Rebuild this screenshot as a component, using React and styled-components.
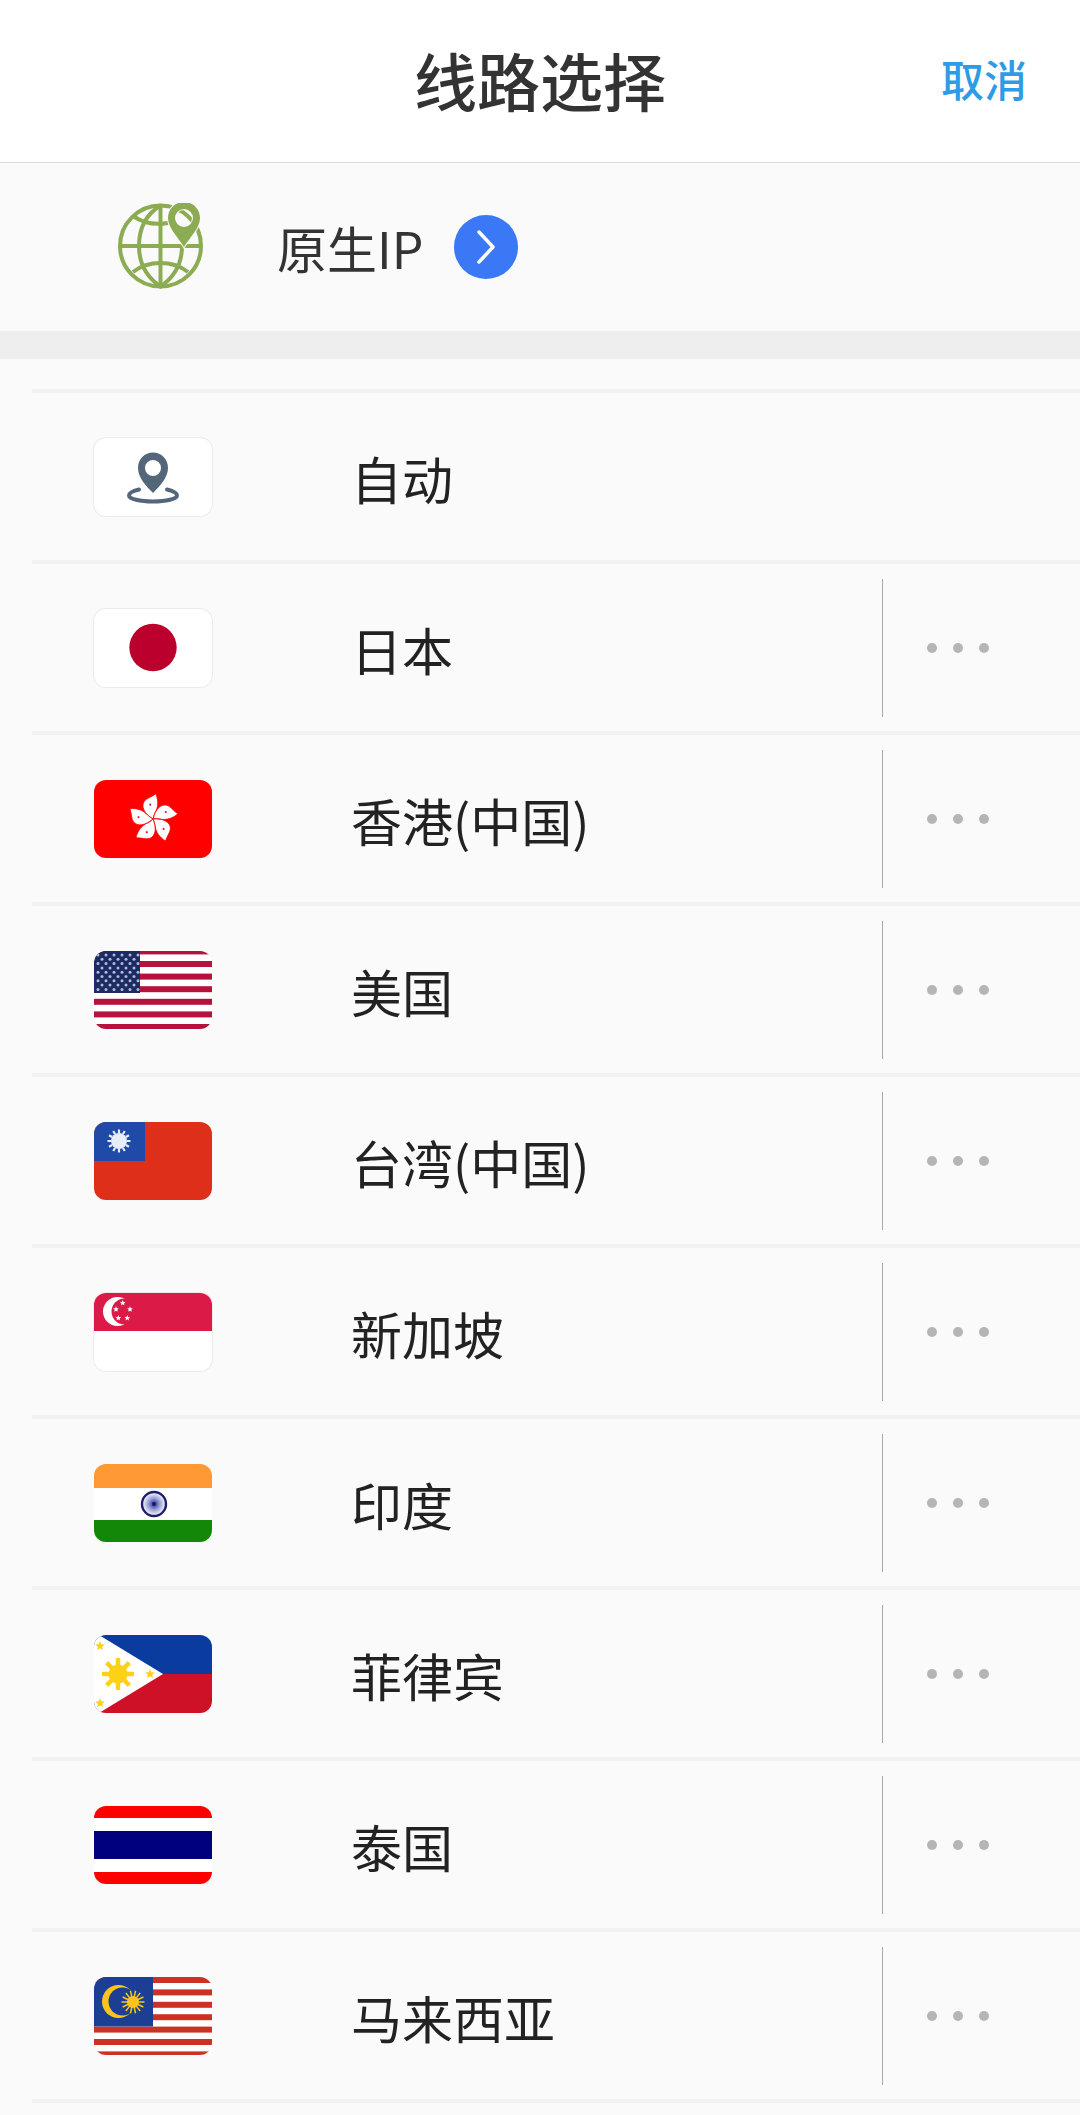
import React from 'react'
import styled, { createGlobalStyle } from 'styled-components'

const GlobalStyle = createGlobalStyle`
  html, body {
    margin: 0;
    padding: 0;
    background: #fafafa;
  }
  body {
    font-family: "Noto Sans CJK SC", "Noto Sans", sans-serif;
  }
`

const Page = styled.div`
  width: 1080px;
  height: 2115px;
  overflow: hidden;
  background: #fafafa;
`
const Header = styled.header`
  display: grid;
  grid-template-columns: 1fr auto 1fr;
  align-items: center;
  box-sizing: border-box;
  height: 163px;
  padding-bottom: 5px;
  background: #fff;
  border-bottom: 1px solid #dcdcdc;
`
const Title = styled.h1`
  grid-column: 2;
  margin: 0;
  font-size: 63px;
  line-height: 1;
  font-weight: 500;
  color: #333;
`
const Cancel = styled.span`
  grid-column: 3;
  justify-self: end;
  margin-right: 53px;
  font-size: 43px;
  line-height: 1;
  font-weight: 500;
  color: #2e9be6;
`
const IpRow = styled.div`
  display: flex;
  align-items: center;
  height: 168px;
  padding-left: 116px;
  background: #fafafa;
`
const IpLabel = styled.span`
  margin-left: 73px;
  font-size: 50px;
  line-height: 1;
  font-weight: 400;
  color: #333;
`
const Arrow = styled.span`
  display: flex;
  align-items: center;
  justify-content: center;
  width: 64px;
  height: 64px;
  margin-left: 31px;
  border-radius: 50%;
  background: #3b78f5;
`
const Band = styled.div`
  height: 28px;
  background: #eeeeee;
`
const List = styled.ul`
  margin: 30px 0 0;
  padding: 0 0 0 32px;
  list-style: none;
`
const Row = styled.li`
  display: flex;
  align-items: center;
  height: 167px;
  padding-left: 62px;
  border-top: 4px solid #f2f2f2;
`
const FlagBox = styled.div`
  flex: none;
  width: 118px;
  height: 78px;
  border-radius: 12px;
  overflow: hidden;
  box-sizing: border-box;
  background: ${props => (props.$plain ? '#fff' : 'transparent')};
  box-shadow: ${props => (props.$plain ? '0 0 0 1px #ebebeb' : 'none')};

  svg {
    display: block;
  }
`
const Name = styled.span`
  flex: 1;
  margin-left: 139px;
  padding-top: 4px;
  font-size: 51px;
  line-height: 1;
  font-weight: 400;
  color: #222;
`
const More = styled.div`
  display: flex;
  align-items: center;
  gap: 16px;
  flex: none;
  width: 198px;
  height: 138px;
  box-sizing: border-box;
  padding-left: 44px;
  border-left: 1px solid #a8a8a8;
`
const Dot = styled.i`
  width: 10px;
  height: 10px;
  border-radius: 50%;
  background: #b5b5b5;
`

const FlagSvg = ({ children }) => (
  <svg width="118" height="78" viewBox="0 0 118 78">{children}</svg>
)

const star = (cx, cy, r, fill) => {
  const pts = []
  for (let i = 0; i < 10; i++) {
    const a = -Math.PI / 2 + (i * Math.PI) / 5
    const rr = i % 2 ? r * 0.45 : r
    pts.push(`${(cx + rr * Math.cos(a)).toFixed(2)},${(cy + rr * Math.sin(a)).toFixed(2)}`)
  }
  return <polygon key={`${cx}-${cy}`} points={pts.join(' ')} fill={fill} />
}

const rays = (cx, cy, r1, r2, n, stroke, width) =>
  Array.from({ length: n }, (_, i) => {
    const a = (i * 2 * Math.PI) / n
    return (
      <line
        key={i}
        x1={cx + r1 * Math.cos(a)}
        y1={cy + r1 * Math.sin(a)}
        x2={cx + r2 * Math.cos(a)}
        y2={cy + r2 * Math.sin(a)}
        stroke={stroke}
        strokeWidth={width}
      />
    )
  })

const AutoIcon = () => (
  <FlagSvg>
    <path
      d="M45 51.500C39 53 35 55 35 57.500 35 61 46 63.500 59 63.500S83 61 83 57.500C83 55 79 53 73 51.500"
      fill="none"
      stroke="#54677a"
      strokeWidth="4"
      strokeLinecap="round"
    />
    <path
      fillRule="evenodd"
      d="M59 14.500C50.500 14.500 44 21 44 30 44 40 53 49 59 55 65 49 74 40 74 30 74 21 67.500 14.500 59 14.500ZM59 22A8 8 0 1 1 59 38 8 8 0 1 1 59 22Z"
      fill="#54677a"
    />
  </FlagSvg>
)

const Japan = () => (
  <FlagSvg>
    <circle cx="59" cy="38.500" r="23.700" fill="#bc002d" />
  </FlagSvg>
)

const HongKong = () => (
  <FlagSvg>
    <rect width="118" height="78" fill="#ff0000" />
    {[0, 72, 144, 216, 288].map(deg => (
      <g key={deg} transform={`translate(59 39) rotate(${deg}) scale(1.100)`}>
        <path
          d="M0 0C-8 -5 -11 -11 -8 -16 -6 -19 -1 -20 2.500 -23 5 -17 5 -11 2 -6 1 -4 0.500 -2 0 0Z"
          fill="#fff"
          stroke="#ff0000"
          strokeWidth="0.700"
        />
        <circle cx="-2.500" cy="-13" r="1" fill="#e8203a" />
      </g>
    ))}
  </FlagSvg>
)

const UnitedStates = () => (
  <FlagSvg>
    <rect width="118" height="78" fill="#fff" />
    {Array.from({ length: 7 }, (_, i) => (
      <rect key={i} y={-2.600 + i * 12.600} width="118" height="6" fill="#b4133e" />
    ))}
    <rect width="46" height="42" fill="#1e2a62" />
    {Array.from({ length: 9 }, (_, r) =>
      Array.from({ length: r % 2 ? 5 : 6 }, (_, c) => (
        <circle
          key={`${r}-${c}`}
          cx={(r % 2 ? 8 : 4) + c * 8}
          cy={4 + r * 4.300}
          r="1.500"
          fill="#a9bddc"
        />
      ))
    )}
  </FlagSvg>
)

const Taiwan = () => (
  <FlagSvg>
    <rect width="118" height="78" fill="#de2f1a" />
    <rect width="51" height="39" fill="#1f4aa8" />
    {rays(25, 19, 8, 11.500, 12, '#e8eef8', 2.200)}
    <circle cx="25" cy="19" r="8" fill="#e8eef8" />
  </FlagSvg>
)

const Singapore = () => (
  <FlagSvg>
    <rect width="118" height="38" fill="#dc1a48" />
    <circle cx="23.500" cy="18.500" r="14.500" fill="#fff" />
    <circle cx="30.500" cy="18.500" r="13" fill="#dc1a48" />
    {star(28.700, 10, 3, '#fff')}
    {star(22, 16.300, 3, '#fff')}
    {star(36, 16.300, 3, '#fff')}
    {star(24.300, 25, 3, '#fff')}
    {star(33.300, 25, 3, '#fff')}
  </FlagSvg>
)

const India = () => (
  <FlagSvg>
    <rect width="118" height="24" fill="#ff9933" />
    <rect y="24" width="118" height="32" fill="#fff" />
    <rect y="56" width="118" height="22" fill="#138808" />
    <defs>
      <radialGradient id="chakra">
        <stop offset="0" stopColor="#2a2f8f" />
        <stop offset="0.5" stopColor="#9fa3d8" />
        <stop offset="1" stopColor="#fff" />
      </radialGradient>
    </defs>
    <circle cx="60" cy="40" r="12" fill="url(#chakra)" stroke="#1b1f6b" strokeWidth="2.400" />
    <circle cx="60" cy="40" r="2" fill="#14186a" />
  </FlagSvg>
)

const Philippines = () => (
  <FlagSvg>
    <rect width="118" height="39" fill="#0a3ca0" />
    <rect y="39" width="118" height="39" fill="#ce1126" />
    <polygon points="5,0 69,39 5,78 0,78 0,0" fill="#fff" />
    {rays(24, 39, 7, 16, 8, '#fcd116', 4.500)}
    <circle cx="24" cy="39" r="9.500" fill="#fcd116" />
    {star(6, 11, 5, '#fcd116')}
    {star(56, 39, 5, '#fcd116')}
    {star(6, 68, 5, '#fcd116')}
  </FlagSvg>
)

const Thailand = () => (
  <FlagSvg>
    <rect width="118" height="78" fill="#ff0000" />
    <rect y="12" width="118" height="54" fill="#fff" />
    <rect y="25" width="118" height="28" fill="#00007f" />
  </FlagSvg>
)

const Malaysia = () => (
  <FlagSvg>
    <rect width="118" height="78" fill="#fff" />
    {Array.from({ length: 7 }, (_, i) => (
      <rect key={i} y={i * 12.400} width="118" height="6" fill="#cc3224" />
    ))}
    <rect width="59" height="49.500" fill="#1c3f94" />
    <circle cx="24.500" cy="24.500" r="16.500" fill="#fcc41c" />
    <circle cx="28.500" cy="24.500" r="14" fill="#1c3f94" />
    {rays(39, 25, 4, 11.500, 14, '#fcc41c', 1.500)}
    <circle cx="39" cy="25" r="6" fill="#fcc41c" />
  </FlagSvg>
)

const Globe = () => (
  <svg width="88" height="88" viewBox="0 0 88 88" fill="none">
    <g stroke="#8bac52" strokeWidth="4">
      <circle cx="44.500" cy="43" r="40.500" />
      <path d="M4 43H84" />
      <path d="M44.500 2.500V83.500" />
      <path d="M44.500 2.500C29 12 23 27 23 43S29 73 44.500 83.500C60 73 66 59 66 43" />
      <path d="M17 13C27 20 40 22 52 20" />
      <path d="M17 69C26 62 36 60 44.500 60S63 62 72 69" />
    </g>
    <path
      fillRule="evenodd"
      d="M68 -1C59 -1 52 6 52 15 52 25 62 34 68 44 74 34 84 25 84 15 84 6 77 -1 68 -1ZM68 6A9 9 0 1 1 68 24 9 9 0 1 1 68 6Z"
      fill="#8bac52"
      stroke="#fafafa"
      strokeWidth="2"
      paintOrder="stroke"
    />
  </svg>
)

const Chevron = () => (
  <svg width="22" height="34" viewBox="0 0 22 34" fill="none">
    <path d="M4 2L18 17 4 32" stroke="#fff" strokeWidth="3.500" strokeLinecap="round" strokeLinejoin="round" />
  </svg>
)

const routes = [
  { name: '自动', Flag: AutoIcon, plain: true, auto: true },
  { name: '日本', Flag: Japan, plain: true },
  { name: '香港(中国)', Flag: HongKong },
  { name: '美国', Flag: UnitedStates },
  { name: '台湾(中国)', Flag: Taiwan },
  { name: '新加坡', Flag: Singapore, plain: true },
  { name: '印度', Flag: India },
  { name: '菲律宾', Flag: Philippines },
  { name: '泰国', Flag: Thailand },
  { name: '马来西亚', Flag: Malaysia },
  { name: '', Flag: null }
]

export default function App () {
  return (
    <Page>
      <GlobalStyle />
      <Header>
        <Title>线路选择</Title>
        <Cancel>取消</Cancel>
      </Header>
      <IpRow>
        <Globe />
        <IpLabel>原生IP</IpLabel>
        <Arrow><Chevron /></Arrow>
      </IpRow>
      <Band />
      <List>
        {routes.map(({ name, Flag, plain, auto }) => (
          <Row key={name || 'end'}>
            {Flag && <FlagBox $plain={plain}><Flag /></FlagBox>}
            {Flag && <Name>{name}</Name>}
            {Flag && !auto && (
              <More>
                <Dot />
                <Dot />
                <Dot />
              </More>
            )}
          </Row>
        ))}
      </List>
    </Page>
  )
}
